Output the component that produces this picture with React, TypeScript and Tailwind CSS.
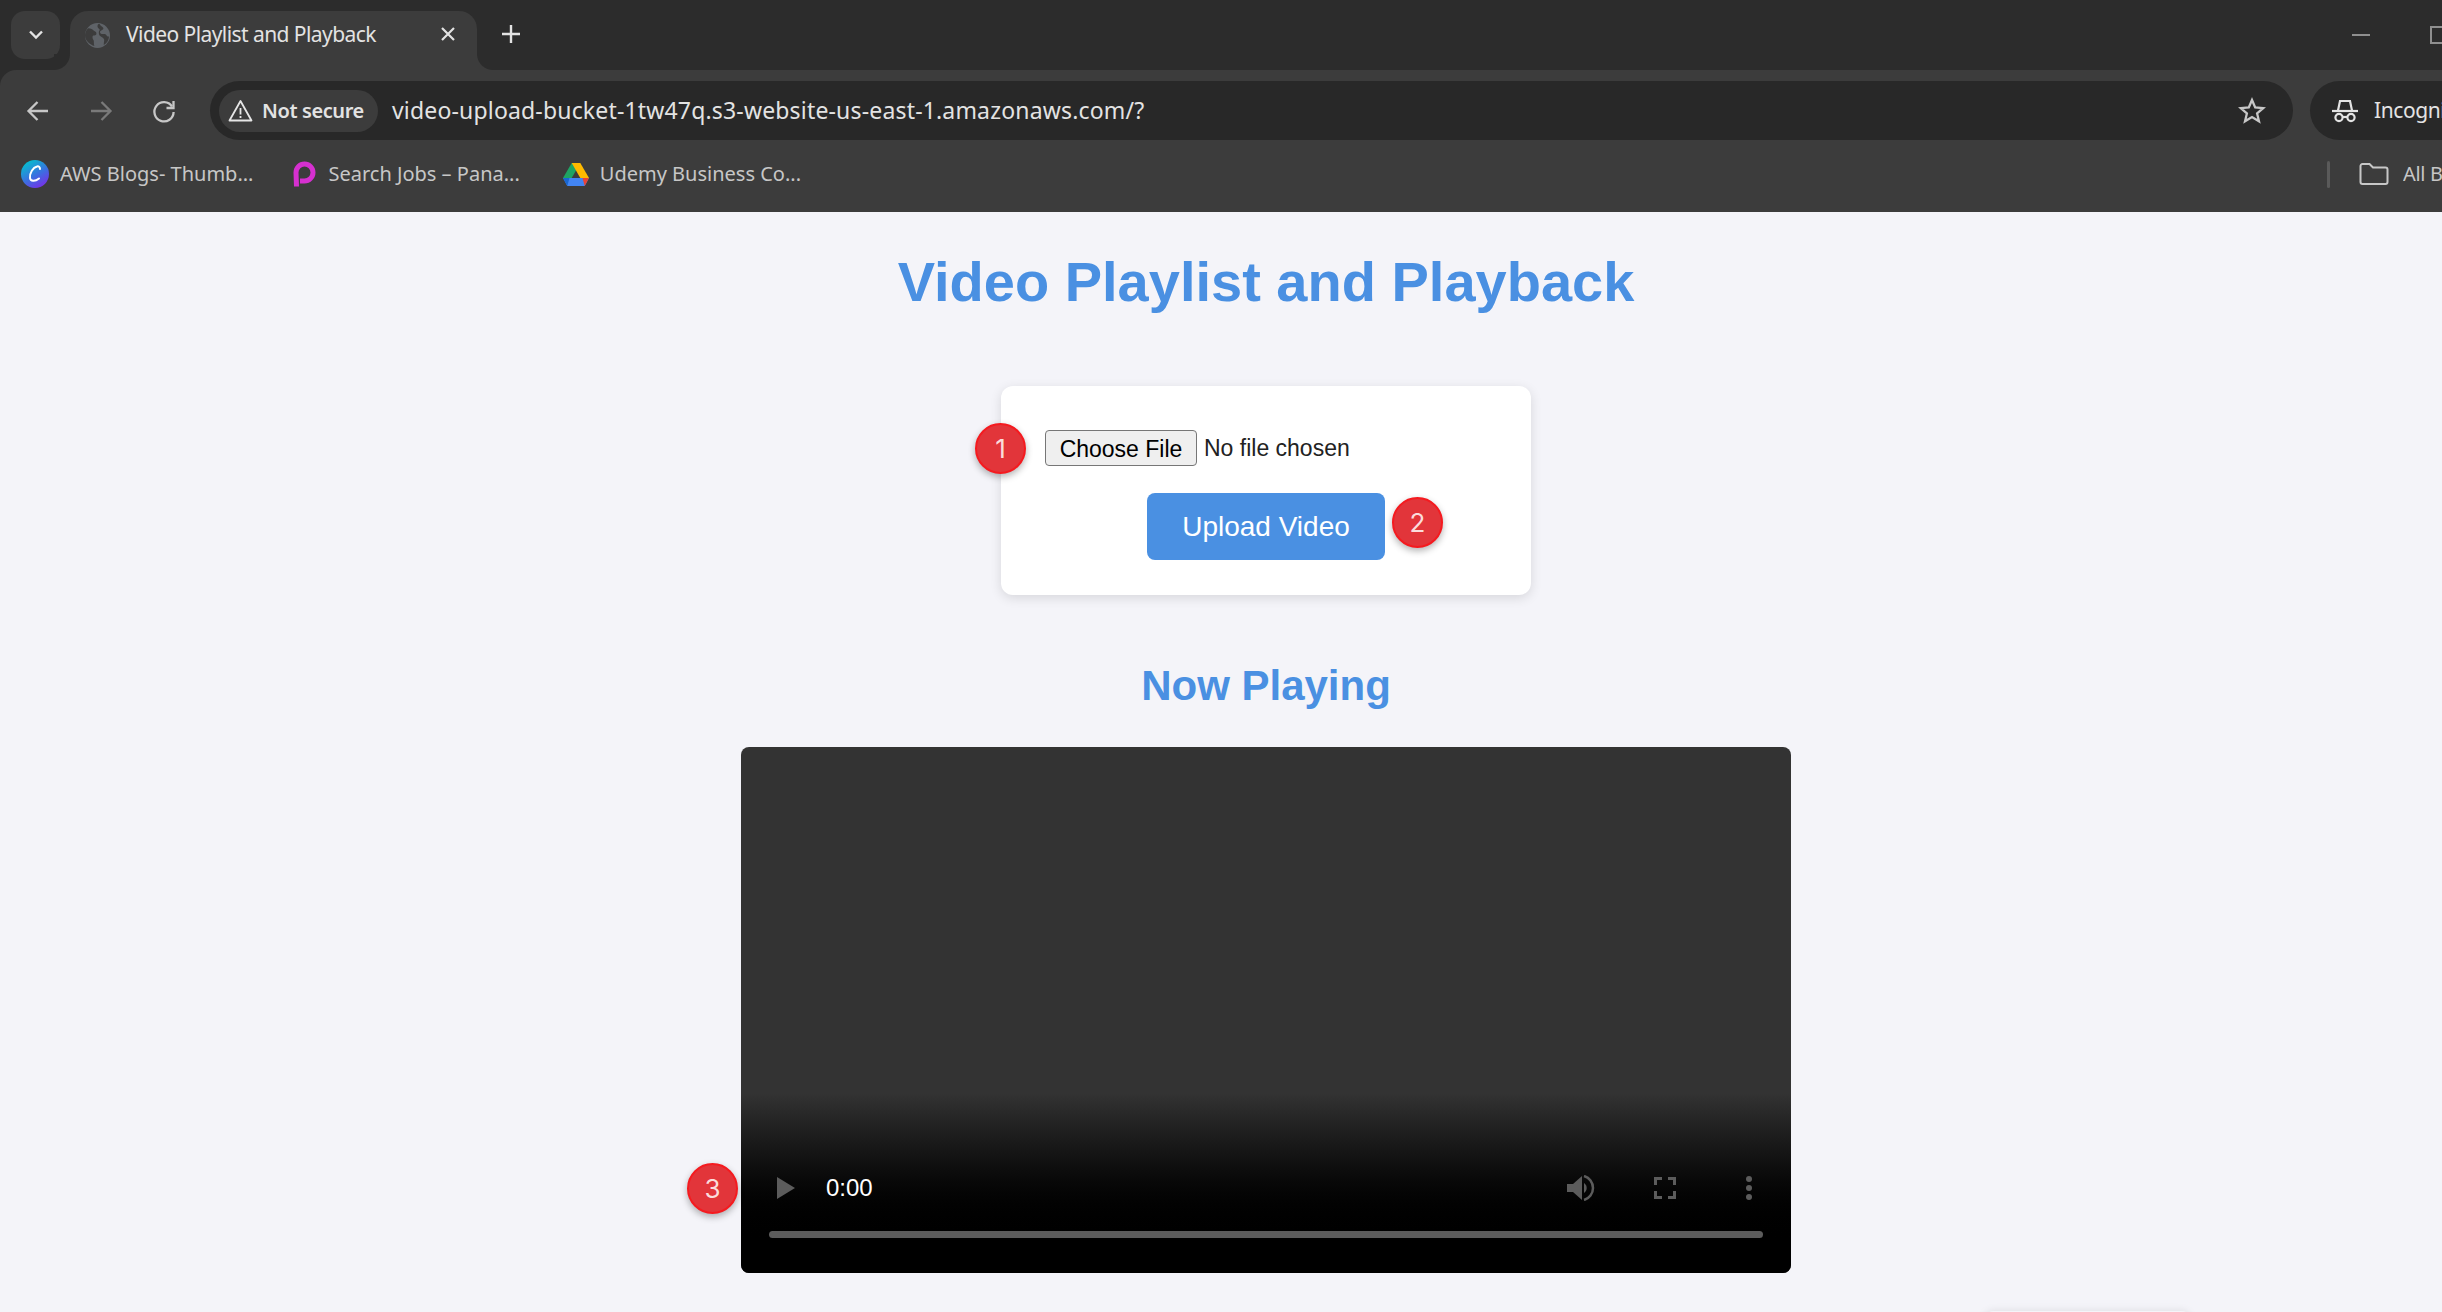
import React from "react";

const chromeFont = "font-['Noto_Sans',sans-serif]";

function Badge({ n, className }: { n: number; className: string }) {
  return (
    <div
      className={`absolute flex h-[51px] w-[51px] items-center justify-center rounded-full border-2 border-[#f51a1f] bg-[#e2353a] text-[26px] text-[#fbdcdc] shadow-[0_3px_7px_rgba(0,0,0,0.3)] font-['Inter',sans-serif] ${className}`}
    >
      {n}
    </div>
  );
}

function Globe() {
  return (
    <svg width="25" height="25" viewBox="0 0 24 24">
      <circle cx="12" cy="12" r="12" fill="#5f6368" />
      <path d="M3 5c3 0 4 1 5 2s3 1 3 3-2 2-3 2-1 3 0 4 0 4 1 6C5 21 0 17 0 12c0-3 1-5 3-7Z" fill="#3c3c3c" />
      <path d="M14 1c1 2 2 2 3 3s1 2-1 3-2 2-1 3 4 0 5 1 1 2 3 2c0 3-2 7-5 8 0-3 1-5 0-6s-3-2-4-3-1-4 0-5-2-2-2-4 1-2 2-2Z" fill="#3c3c3c" />
    </svg>
  );
}

function NavArrow({ flip, color }: { flip?: boolean; color: string }) {
  return (
    <svg width="26" height="26" viewBox="0 0 26 26" fill="none" stroke={color} strokeWidth="2.3" className={flip ? "rotate-180" : ""}>
      <path d="M23 13H4M12.5 4 3.5 13l9 9" />
    </svg>
  );
}

function Reload() {
  return (
    <svg width="26" height="26" viewBox="0 0 26 26" fill="none" stroke="#c7c7c7" strokeWidth="2.3">
      <path d="M21 8.5A9.6 9.6 0 1 0 22.6 14" />
      <path d="M22.5 3v7h-7" />
    </svg>
  );
}

function WarnIcon() {
  return (
    <svg width="25" height="23" viewBox="0 0 25 23" fill="none" stroke="#e6e6e6" strokeWidth="1.8" strokeLinejoin="round">
      <path d="M12.5 2 23.5 21.5h-22Z" />
      <path d="M12.5 9v6.5M12.5 17v2" />
    </svg>
  );
}

function Star() {
  return (
    <svg width="28" height="27" viewBox="0 0 28 27" fill="none" stroke="#c7c7c7" strokeWidth="2.3" strokeLinejoin="miter">
      <path d="m14 3 3.2 7.4 8 .7-6.1 5.3 1.9 7.9L14 20.1l-7 4.2 1.9-7.9-6.1-5.3 8-.7Z" />
    </svg>
  );
}

function IncognitoIcon() {
  return (
    <svg width="26" height="24" viewBox="0 0 26 24" fill="none" stroke="#e3e3e3" strokeWidth="2.2">
      <path d="M0 12h26" />
      <path d="M6 11.5 8 2h10l2 9.5" />
      <circle cx="7" cy="18.5" r="3.6" />
      <circle cx="19" cy="18.5" r="3.6" />
      <path d="M10.5 18h5" />
    </svg>
  );
}

function CanvaIcon() {
  return (
    <svg width="28" height="28" viewBox="0 0 28 28">
      <defs>
        <linearGradient id="cv" x1="0.2" y1="0" x2="0.8" y2="1">
          <stop offset="0" stopColor="#00c4cc" />
          <stop offset="0.55" stopColor="#3b6fe0" />
          <stop offset="1" stopColor="#7d2ae8" />
        </linearGradient>
      </defs>
      <circle cx="14" cy="14" r="14" fill="url(#cv)" />
      <path d="M19 9c0-2-1.500-3-3-2.500C12 7.500 8.500 13 9 18c.4 3.500 5 3.800 9 .5" fill="none" stroke="#fff" strokeWidth="2" strokeLinecap="round" />
    </svg>
  );
}

function PIcon() {
  return (
    <svg width="23" height="27" viewBox="0 0 23 27" fill="none">
      <path d="M3.500 25.500 3 11.500a8.500 8.500 0 1 1 8.500 8.500H7" stroke="#d630d0" strokeWidth="5" />
    </svg>
  );
}

function DriveIcon() {
  return (
    <svg width="26" height="23" viewBox="0 0 26 23">
      <path d="M8.700 0h8.600l-8.600 15H0Z" fill="#1fa463" />
      <path d="M8.700 0h8.600l8.700 15h-8.700Z" fill="#ffba00" />
      <path d="M0 15h8.700L17.300 15H26l-4.300 8H4.300Z" fill="#4285f4" />
      <path d="M0 15h6.500l-2.200 8Z" fill="#1967d2" />
      <path d="M26 15h-6.500l2.200 8Z" fill="#ea4335" />
    </svg>
  );
}

function Folder() {
  return (
    <svg width="30" height="22" viewBox="0 0 30 22" fill="none" stroke="#c7c7c7" strokeWidth="2">
      <path d="M1.500 3a2 2 0 0 1 2-2h7l3.500 3.500h12.500a2 2 0 0 1 2 2V19a2 2 0 0 1-2 2h-23a2 2 0 0 1-2-2Z" />
    </svg>
  );
}

function Bookmark({ icon, label, className }: { icon: React.ReactNode; label: string; className: string }) {
  return (
    <div className={`flex items-center ${className}`}>
      {icon}
      <span className="text-[20px] text-[#c7c7c7]">{label}</span>
    </div>
  );
}

function BrowserChrome() {
  return (
    <header className={`shrink-0 bg-[#2c2c2c] ${chromeFont}`}>
      <div className="flex h-[70px] items-end bg-[#2c2c2c]">
        <div className="mb-[11px] ml-[11px] flex h-[48px] w-[49px] items-center justify-center rounded-[14px] bg-[#3c3c3c]">
          <svg width="16" height="10" viewBox="0 0 16 10" fill="none" stroke="#e3e3e3" strokeWidth="2.4">
            <path d="m2 1.500 6 6 6-6" />
          </svg>
        </div>
        <div className="relative ml-[10px] flex h-[59px] w-[407px] items-center rounded-t-[18px] bg-[#3c3c3c] pb-[11px] pl-[15px]">
          <div className="absolute bottom-0 left-[-16px] h-[16px] w-[16px] bg-[radial-gradient(circle_at_0_0,#2c2c2c_15.5px,#3c3c3c_16.5px)]" />
          <div className="absolute bottom-0 right-[-16px] h-[16px] w-[16px] bg-[radial-gradient(circle_at_100%_0,#2c2c2c_15.5px,#3c3c3c_16.5px)]" />
          <Globe />
          <span className="ml-[16px] w-[315px] text-[21px] tracking-[-0.57px] text-[#e3e3e3]">Video Playlist and Playback</span>
          <svg width="14" height="14" viewBox="0 0 14 14" stroke="#e3e3e3" strokeWidth="2.2" className="mb-[2px]">
            <path d="m1 1 12 12M13 1 1 13" />
          </svg>
        </div>
        <svg width="20" height="20" viewBox="0 0 20 20" stroke="#e3e3e3" strokeWidth="2.4" className="mb-[26px] ml-[24px]">
          <path d="M10 1v18M1 10h18" />
        </svg>
        <div className="mb-[34px] ml-auto h-[2px] w-[18px] bg-[#8f8f8f]" />
        <div className="mb-[26px] ml-[60px] mr-[-6px] h-[18px] w-[18px] border-2 border-[#8f8f8f]" />
      </div>
      <div className="h-[142px] rounded-tl-[16px] bg-[#3c3c3c]">
        <div className="flex h-[70px] items-end">
          <div className="flex h-[59px] w-full items-center">
            <div className="ml-[25px]"><NavArrow color="#c7c7c7" /></div>
            <div className="ml-[37px]"><NavArrow flip color="#7a7a7a" /></div>
            <div className="ml-[37px]"><Reload /></div>
            <div className="ml-[33px] flex h-[59px] w-[2083px] shrink-0 items-center rounded-full bg-[#282828] pl-[9px]">
              <div className="flex h-[42px] w-[159px] items-center rounded-full bg-[#3c3c3c] pl-[9px]">
                <WarnIcon />
                <span className="ml-[9px] text-[20px] font-semibold tracking-[-0.4px] text-[#e3e3e3]">Not secure</span>
              </div>
              <span className="ml-[14px] text-[23px] tracking-[0.17px] text-[#e3e3e3]">video-upload-bucket-1tw47q.s3-website-us-east-1.amazonaws.com/?</span>
              <div className="ml-auto mr-[27px] flex"><Star /></div>
            </div>
            <div className="ml-[17px] flex h-[59px] w-[200px] shrink-0 items-center rounded-l-full bg-[#282828] pl-[22px]">
              <IncognitoIcon />
              <span className="ml-[16px] text-[21px] tracking-[-0.4px] text-[#e3e3e3]">Incognito</span>
            </div>
          </div>
        </div>
        <div className="flex h-[72px] items-center pb-[4px]">
          <Bookmark className="ml-[21px] gap-[11px]" icon={<CanvaIcon />} label="AWS Blogs- Thumb..." />
          <Bookmark className="ml-[40px] gap-[12px]" icon={<PIcon />} label="Search Jobs – Pana..." />
          <Bookmark className="ml-[43px] gap-[11px]" icon={<DriveIcon />} label="Udemy Business Co..." />
          <div className="ml-auto h-[27px] w-[3px] rounded-full bg-[#5a5a5a]" />
          <div className="ml-[29px] flex items-center gap-[14px]">
            <Folder />
            <span className="w-[39px] overflow-hidden whitespace-nowrap text-[20px] tracking-[-0.35px] text-[#c7c7c7]">All Bookmarks</span>
          </div>
        </div>
      </div>
    </header>
  );
}

function VideoPlayer() {
  return (
    <div className="relative flex h-[526px] w-[1050px] flex-col justify-end rounded-[8px] bg-[#333333]">
      <Badge n={3} className="left-[-54px] top-[416px]" />
      <div className="flex h-[180px] flex-col justify-end rounded-b-[8px] bg-gradient-to-b from-[#333333] to-[#000000] to-[85%] px-[28px] pb-[35px]">
        <div className="flex items-center">
          <svg width="18" height="22" viewBox="0 0 18 22" className="ml-[8px]">
            <path d="M0 0 18 11 0 22Z" fill="#5c5c5c" />
          </svg>
          <span className="ml-[31px] text-[24px] leading-[30px] text-white font-['Liberation_Sans',sans-serif]">0:00</span>
          <svg width="28" height="26" viewBox="0 0 28 26" className="ml-auto">
            <path d="M0 9h6l9-8v24l-9-8H0Z" fill="#5c5c5c" />
            <path d="M17 8a6 6 0 0 1 0 10Z" fill="#5c5c5c" />
            <path d="M17 1a12.500 12.500 0 0 1 0 24" fill="none" stroke="#5c5c5c" strokeWidth="2.500" />
          </svg>
          <svg width="22" height="22" viewBox="0 0 22 22" fill="none" stroke="#5c5c5c" strokeWidth="3" className="ml-[59px]">
            <path d="M8 1.500H1.500V8M14 1.500h6.500V8M8 20.500H1.500V14M14 20.500h6.500V14" />
          </svg>
          <svg width="6" height="24" viewBox="0 0 6 24" fill="#5c5c5c" className="ml-[70px] mr-[11px]">
            <circle cx="3" cy="3" r="3" />
            <circle cx="3" cy="12" r="3" />
            <circle cx="3" cy="21" r="3" />
          </svg>
        </div>
        <div className="mt-[28px] h-[7px] rounded-full bg-[#5c5c5c]" />
      </div>
    </div>
  );
}

export default function App() {
  return (
    <div className="relative flex h-screen flex-col overflow-hidden bg-[#f4f4f9]">
      <BrowserChrome />
      <main className="flex w-[2532px] shrink-0 flex-col items-center font-['Liberation_Sans',sans-serif]">
        <h1 className="mt-[35px] text-[56px] font-bold leading-[69px] text-[#4a90e2]">Video Playlist and Playback</h1>
        <section className="relative mt-[70px] flex h-[209px] w-[530px] flex-col items-center rounded-[12px] bg-white pt-[44px] shadow-[0_3px_12px_rgba(0,0,0,0.12)]">
          <Badge n={1} className="left-[-26px] top-[37px]" />
          <div className="flex w-full items-center pl-[44px] text-[23px] leading-[36px]">
            <button className="h-[36px] w-[152px] rounded-[4px] border border-[#767676] bg-[#efefef] text-black">Choose File</button>
            <span className="ml-[7px] text-[#222222]">No file chosen</span>
          </div>
          <button className="relative mt-[27px] h-[67px] w-[238px] rounded-[8px] bg-[#4a90e2] text-[28px] text-white">
            Upload Video
            <Badge n={2} className="left-[245px] top-[4px]" />
          </button>
        </section>
        <h2 className="mt-[67px] text-[42px] font-bold leading-[48px] text-[#4a90e2]">Now Playing</h2>
        <div className="mt-[37px]">
          <VideoPlayer />
        </div>
      </main>
      <div className="absolute left-[1985px] top-[1311px] h-[20px] w-[205px] rounded-[8px] bg-[#f4f4f9] shadow-[0_0_8px_rgba(0,0,0,0.1)]" />
    </div>
  );
}
